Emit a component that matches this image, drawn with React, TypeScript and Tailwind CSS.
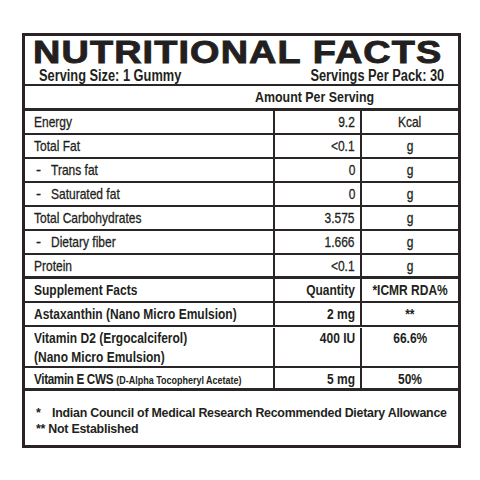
const wide = "font-['Liberation_Sans',Arial,sans-serif]";
const line = "border-[#2a2627]";

// narrow text: Arial squeezed horizontally to look like a condensed face
function N({ children, align = "left" }: { children: React.ReactNode; align?: "left" | "right" | "center" }) {
  const origin = align === "left" ? "origin-left" : align === "right" ? "origin-right" : "origin-center";
  return <span className={`inline-block whitespace-nowrap scale-x-[0.8] ${origin}`}>{children}</span>;
}

type Row = { label: string; value: string; unit: string; sub?: boolean; thick?: boolean };

const rows: Row[] = [
  { label: "Energy", value: "9.2", unit: "Kcal" },
  { label: "Total Fat", value: "<0.1", unit: "g" },
  { label: "Trans fat", value: "0", unit: "g", sub: true },
  { label: "Saturated fat", value: "0", unit: "g", sub: true },
  { label: "Total Carbohydrates", value: "3.575", unit: "g" },
  { label: "Dietary fiber", value: "1.666", unit: "g", sub: true },
  { label: "Protein", value: "<0.1", unit: "g", thick: true },
];

function Cells({
  left,
  mid,
  right,
  className,
}: {
  left: React.ReactNode;
  mid: React.ReactNode;
  right: React.ReactNode;
  className: string;
}) {
  return (
    <div className={`flex ${className}`}>
      <div className={`w-[250px] shrink-0 border-r-2 ${line} pl-[9px]`}>{left}</div>
      <div className={`w-[87px] shrink-0 border-r-2 ${line} pr-[5px] text-right`}>{mid}</div>
      <div className="flex-1 text-center">{right}</div>
    </div>
  );
}

export default function App() {
  return (
    <div className="w-[480px] h-[480px] bg-white pt-[33px] pl-[22px]">
      <div className={`w-[439px] h-[415px] border-[3px] border-[#2a2224] text-[#231f20] ${wide} flex flex-col`}>
        {/* header */}
        <div className={`h-[50px] border-b-2 ${line} shrink-0 px-[8px]`}>
          <div className="w-max font-black text-[31px] leading-[27px] mt-[3px] tracking-[0.03em] origin-left scale-x-[1.22] whitespace-nowrap [-webkit-text-stroke:0.9px_#231f20]">
            NUTRITIONAL FACTS
          </div>
          <div className="flex justify-between text-[16px] leading-[18px] font-bold px-[6px] mt-[1px]">
            <N>Serving Size: 1 Gummy</N>
            <N align="right">Servings Per Pack: 30</N>
          </div>
        </div>

        <div className={`h-[25px] border-b-[3px] ${line} shrink-0 flex items-center pl-[230px] text-[15.5px] font-bold`}>
          <N>Amount Per Serving</N>
        </div>

        {rows.map((r, i) => (
          <Cells
            key={i}
            className={`h-[24px] shrink-0 text-[15px] leading-[22px] [-webkit-text-stroke:0.3px_#231f20] ${r.thick ? "border-b-[3px]" : "border-b-2"} ${line}`}
            left={
              r.sub ? (
                <span className="flex">
                  <span className="w-[17px] pl-[2px]">-</span>
                  <N>{r.label}</N>
                </span>
              ) : (
                <N>{r.label}</N>
              )
            }
            mid={<N align="right">{r.value}</N>}
            right={<N align="center">{r.unit}</N>}
          />
        ))}

        <Cells
          className={`h-[24px] shrink-0 text-[15px] leading-[22px] font-bold border-b-2 ${line}`}
          left={<N>Supplement Facts</N>}
          mid={<N align="right">Quantity</N>}
          right={<N align="center">*ICMR RDA%</N>}
        />
        <Cells
          className={`h-[24px] shrink-0 text-[15px] leading-[22px] font-bold border-b-2 ${line}`}
          left={<N>Astaxanthin (Nano Micro Emulsion)</N>}
          mid={<N align="right">2 mg</N>}
          right={<N align="center">**</N>}
        />
        <Cells
          className={`h-[41px] shrink-0 text-[15px] leading-[19px] font-bold border-b-2 ${line} pt-[1px]`}
          left={
            <N>
              Vitamin D2 (Ergocalciferol)
              <br />
              (Nano Micro Emulsion)
            </N>
          }
          mid={<N align="right">400 IU</N>}
          right={<N align="center">66.6%</N>}
        />
        <Cells
          className={`h-[23px] shrink-0 text-[15px] leading-[22px] font-bold border-b-[3px] ${line}`}
          left={
            <span className="inline-block whitespace-nowrap scale-x-[0.78] origin-left">
              <span className="tracking-[-0.03em]">Vitamin E CWS</span>{" "}
              <span className="text-[11.5px]">(D-Alpha Tocopheryl Acetate)</span>
            </span>
          }
          mid={<N align="right">5 mg</N>}
          right={<N align="center">50%</N>}
        />

        {/* footnotes */}
        <div className="flex-1 font-bold text-[12.4px] tracking-[-0.02em] leading-[16px] pl-[11px] pt-[14px]">
          <div className="flex whitespace-nowrap">
            <span className="w-[16px]">*</span>
            <span>Indian Council of Medical Research Recommended Dietary Allowance</span>
          </div>
          <div>** Not Established</div>
        </div>
      </div>
    </div>
  );
}
